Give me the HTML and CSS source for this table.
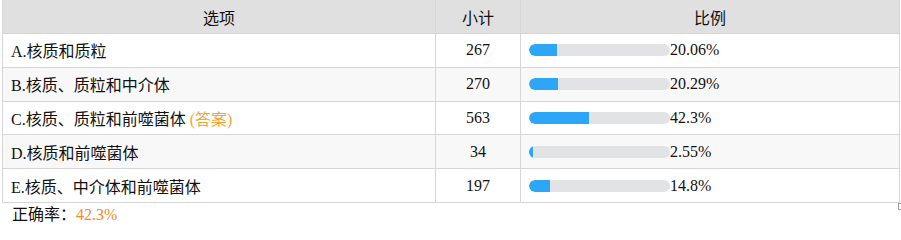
FILE: index.html
```html
<!DOCTYPE html>
<html>
<head>
<meta charset="utf-8">
<link rel="stylesheet" href="styles.css">
</head>
<body>
<div class="wrap">
  <table class="stats">
    <colgroup>
      <col class="c-opt">
      <col class="c-cnt">
      <col class="c-pct">
    </colgroup>
    <thead>
      <tr><th>选项</th><th>小计</th><th>比例</th></tr>
    </thead>
    <tbody>
      <tr>
        <td class="opt">A.核质和质粒</td>
        <td class="cnt">267</td>
        <td class="pct"><div class="bar"><span class="track"><span class="fill" style="width:20.06%"></span></span><span class="val">20.06%</span></div></td>
      </tr>
      <tr class="alt">
        <td class="opt">B.核质、质粒和中介体</td>
        <td class="cnt">270</td>
        <td class="pct"><div class="bar"><span class="track"><span class="fill" style="width:20.29%"></span></span><span class="val">20.29%</span></div></td>
      </tr>
      <tr>
        <td class="opt">C.核质、质粒和前噬菌体 <span class="ans">(答案)</span></td>
        <td class="cnt">563</td>
        <td class="pct"><div class="bar"><span class="track"><span class="fill" style="width:42.3%"></span></span><span class="val">42.3%</span></div></td>
      </tr>
      <tr class="alt">
        <td class="opt">D.核质和前噬菌体</td>
        <td class="cnt">34</td>
        <td class="pct"><div class="bar"><span class="track"><span class="fill" style="width:2.55%"></span></span><span class="val">2.55%</span></div></td>
      </tr>
      <tr>
        <td class="opt">E.核质、中介体和前噬菌体</td>
        <td class="cnt">197</td>
        <td class="pct"><div class="bar"><span class="track"><span class="fill" style="width:14.8%"></span></span><span class="val">14.8%</span></div></td>
      </tr>
    </tbody>
  </table>
  <span class="handle"></span>
  <div class="rate">正确率：<span class="rate-val">42.3%</span></div>
</div>
</body>
</html>
```
FILE: styles.css
```css
html, body {
  margin: 0;
  padding: 0;
  background: #ffffff;
}
body {
  font-family: "Liberation Serif", "Noto Sans CJK SC", serif;
  font-size: 16px;
  color: #111111;
}
.wrap {
  position: relative;
  padding: 0 2px;
}
.stats {
  width: 897px;
  border-collapse: collapse;
  table-layout: fixed;
}
.c-opt { width: 433px; }
.c-cnt { width: 85px; }
.c-pct { width: 379px; }
.stats th {
  background: #e0e0e0;
  font-weight: normal;
  height: 32px;
  padding: 0;
  text-align: center;
  border: 1px solid #d6d6d6;
  border-top-color: #e0e0e0;
}
.stats td {
  height: 32.8px;
  padding: 0 8px;
  border: 1px solid #d6d6d6;
  background: #ffffff;
}
.stats tr.alt td {
  background: #f8f8f8;
}
.cnt {
  text-align: center;
}
.bar {
  display: flex;
  align-items: center;
}
.track {
  display: block;
  width: 141px;
  height: 12px;
  border-radius: 6px;
  background: #e2e3e5;
  overflow: hidden;
  flex: none;
}
.fill {
  display: block;
  height: 100%;
  background: #2ea6f7;
  border-radius: 6px 0 0 6px;
}
.val {
  line-height: 1;
}
.ans {
  color: #f4a52e;
}
.handle {
  position: absolute;
  right: 0;
  top: 203px;
  width: 2px;
  height: 5px;
  border: 1px solid #9a9a9a;
  border-right: none;
}
.rate {
  padding: 2px 10px 0;
  line-height: 20px;
}
.rate-val {
  color: #f58a1f;
}
```
